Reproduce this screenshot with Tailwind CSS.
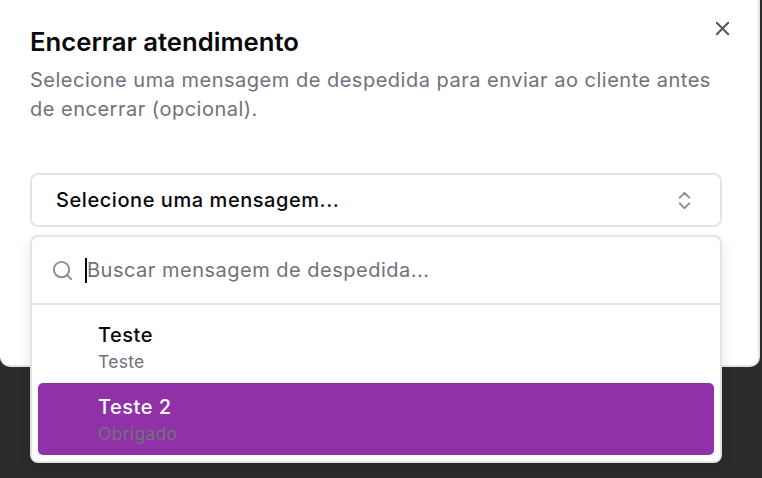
<!doctype html>
<html><head><meta charset="utf-8"><script src="https://cdn.jsdelivr.net/npm/@tailwindcss/browser@4"></script></head>
<body class="m-0 h-[478px] w-[762px] overflow-hidden bg-[#2e2c2a] font-['Inter',sans-serif]">
<div class="relative h-[478px] w-[762px]">
<div class="h-[367px] w-[760px] rounded-b-[10px] border-r-2 border-b-2 border-[#e4e4e7] bg-white pt-[27px] pl-[30px] pr-[30px]">
<h2 class="text-[25.7px] leading-[30px] font-semibold text-[#09090b]">Encerrar atendimento</h2>
<p class="mt-[9px] text-[20px] leading-[29px] tracking-[0.5px] text-[#71717a]">Selecione uma mensagem de despedida para enviar ao cliente antes de encerrar (opcional).</p>
<div class="mt-[49px] flex h-[54px] w-[692px] items-center justify-between rounded-lg border-2 border-[#e4e4e7] pr-[24px] pl-[24px]">
<span class="text-[20px] font-medium tracking-[0.56px] text-[#09090b]">Selecione uma mensagem...</span>
<svg width="23" height="23" viewBox="0 0 24 24" fill="none" stroke="#8c8c8c" stroke-width="2" stroke-linecap="round" stroke-linejoin="round"><path d="m7 15 5 5 5-5"/><path d="m7 9 5-5 5 5"/></svg>
</div>
</div>
<div class="absolute top-[235px] left-[30px] h-[228px] w-[692px] overflow-hidden rounded-lg border-2 border-[#e4e4e7] bg-white shadow-[0_6px_14px_rgba(0,0,0,0.1)]">
<div class="flex h-[68px] items-center border-b-2 border-[#e4e4e7] pl-[19px]">
<svg width="23" height="23" viewBox="0 0 24 24" fill="none" stroke="#8c8c8c" stroke-width="2" stroke-linecap="round" stroke-linejoin="round"><circle cx="11" cy="11" r="8"/><path d="m21 21-4.3-4.3"/></svg>
<span class="ml-[11px] h-[25px] w-[2px] bg-[#09090b]"></span>
<span class="text-[20px] tracking-[0.5px] text-[#71717a]">Buscar mensagem de despedida...</span>
</div>
<div class="p-[6px]">
<div class="h-[72px] pt-[10px] pl-[60px]">
<div class="text-[20px] leading-[29px] font-medium tracking-[0.5px] text-[#09090b]">Teste</div>
<div class="text-[17.5px] leading-[24px] tracking-[0.3px] text-[#71717a]">Teste</div>
</div>
<div class="h-[72px] rounded-[5px] bg-[#9031a8] pt-[10px] pl-[60px]">
<div class="text-[20px] leading-[29px] font-medium tracking-[0.5px] text-white">Teste 2</div>
<div class="text-[17.5px] leading-[24px] tracking-[0.3px] text-[#71717a]">Obrigado</div>
</div>
</div>
</div>
<svg class="absolute top-[17px] left-[711px]" width="23" height="23" viewBox="0 0 24 24" fill="none" stroke="#52525b" stroke-width="2" stroke-linecap="round" stroke-linejoin="round"><path d="M18 6 6 18"/><path d="m6 6 12 12"/></svg>
</div>
</body></html>
